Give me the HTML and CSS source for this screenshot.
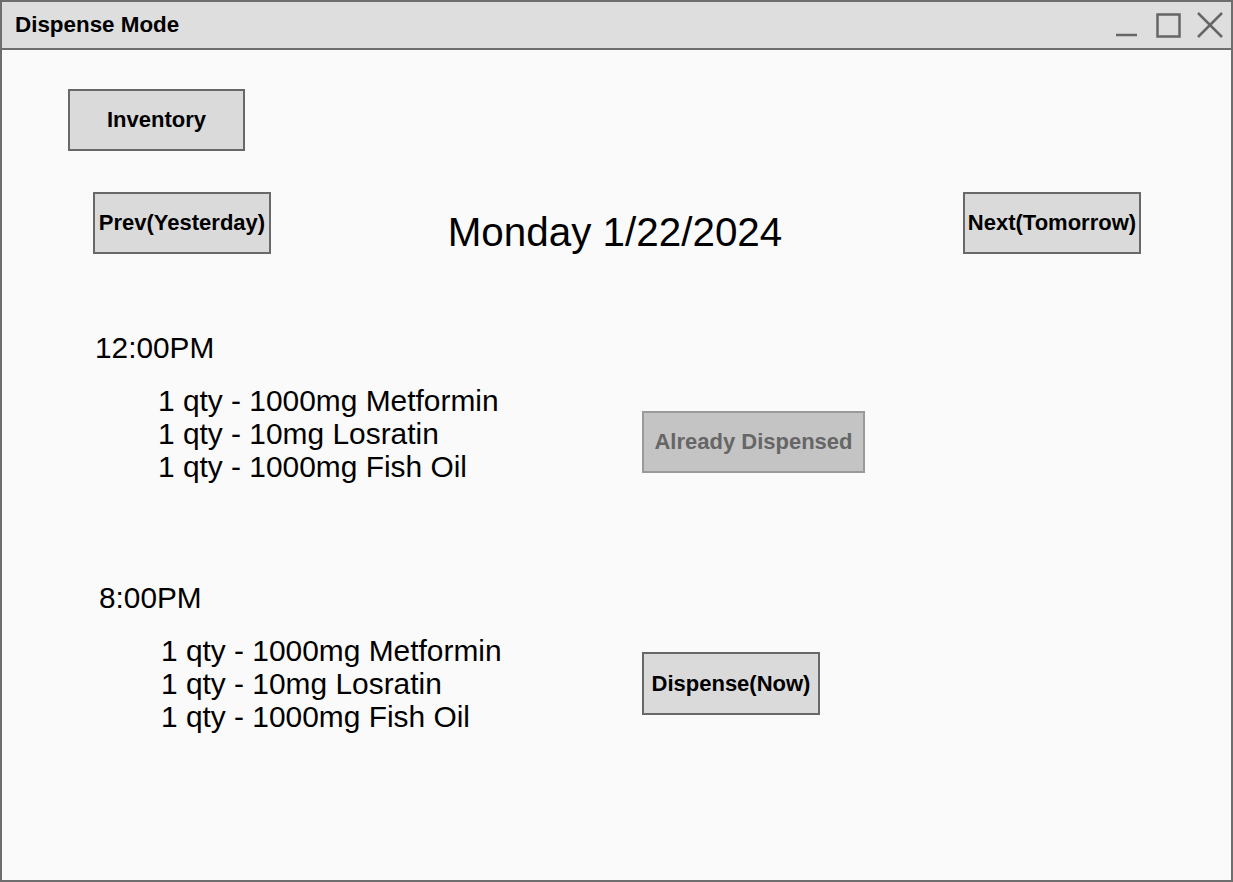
FILE: index.html
```html
<!DOCTYPE html>
<html lang="en">
<head>
<meta charset="utf-8">
<title>Dispense Mode</title>
<link rel="stylesheet" href="styles.css">
</head>
<body>
<div class="window">
  <header class="titlebar">
    <span class="title">Dispense Mode</span>
    <svg class="controls" width="120" height="46" viewBox="0 0 120 46" aria-hidden="true">
      <line x1="5" y1="33" x2="26" y2="33" stroke="#666" stroke-width="2.5"/>
      <rect x="46.5" y="12.5" width="22" height="22" fill="none" stroke="#666" stroke-width="2.5"/>
      <line x1="87" y1="11" x2="111" y2="35" stroke="#666" stroke-width="2.5"/>
      <line x1="111" y1="11" x2="87" y2="35" stroke="#666" stroke-width="2.5"/>
    </svg>
  </header>
  <main class="content">
    <button class="btn btn-inventory">Inventory</button>
    <div class="nav">
      <button class="btn">Prev(Yesterday)</button>
      <div class="date">Monday 1/22/2024</div>
      <button class="btn">Next(Tomorrow)</button>
    </div>
    <section class="slot">
      <div class="slot-time">12:00PM</div>
      <div class="slot-body">
        <ul class="meds">
          <li>1 qty - 1000mg Metformin</li>
          <li>1 qty - 10mg Losratin</li>
          <li>1 qty - 1000mg Fish Oil</li>
        </ul>
        <button class="btn btn-wide btn-disabled">Already Dispensed</button>
      </div>
    </section>
    <section class="slot slot-late">
      <div class="slot-time">8:00PM</div>
      <div class="slot-body">
        <ul class="meds">
          <li>1 qty - 1000mg Metformin</li>
          <li>1 qty - 10mg Losratin</li>
          <li>1 qty - 1000mg Fish Oil</li>
        </ul>
        <button class="btn btn-now">Dispense(Now)</button>
      </div>
    </section>
  </main>
</div>
</body>
</html>
```
FILE: styles.css
```css
* { box-sizing: border-box; }
html, body { margin: 0; padding: 0; }
body {
  font-family: "Liberation Sans", Arial, sans-serif;
  background: #fafafa;
  color: #000;
}
.window {
  width: 1233px;
  height: 882px;
  border: 2px solid #6e6e6e;
  background: #fafafa;
  display: flex;
  flex-direction: column;
}
.titlebar {
  height: 48px;
  flex: none;
  background: #dedede;
  border-bottom: 2px solid #6e6e6e;
  display: flex;
  align-items: center;
  justify-content: space-between;
  padding-left: 13px;
}
.title {
  font-size: 22.4px;
  font-weight: bold;
}
.controls { display: block; }
.content {
  flex: 1;
  display: flex;
  flex-direction: column;
  align-items: flex-start;
}
.btn {
  font-family: "Liberation Sans", Arial, sans-serif;
  font-size: 22px;
  font-weight: bold;
  color: #000;
  background: #dadada;
  border: 2px solid #686868;
  width: 178px;
  height: 62px;
  padding: 0;
  margin: 0;
  white-space: nowrap;
  display: flex;
  align-items: center;
  justify-content: center;
}
.btn-inventory {
  width: 177px;
  margin: 39px 0 0 66px;
}
.nav {
  margin: 41px 0 0 91px;
  width: 1048px;
  display: flex;
  justify-content: space-between;
  align-items: flex-start;
}
.date {
  font-size: 40.4px;
  line-height: 46px;
  margin-top: 17px;
  padding-right: 4px;
}
.slot { margin-top: 76px; }
.slot-late { margin-top: 98px; }
.slot-time {
  font-size: 29.8px;
  line-height: 34px;
  padding-left: 93px;
}
.slot-late .slot-time { padding-left: 97px; }
.slot-body {
  margin-top: 19px;
  display: flex;
  align-items: flex-start;
}
.meds {
  list-style: none;
  margin: 0;
  width: 640px;
  padding: 0 0 0 156px;
  font-size: 29.9px;
  line-height: 33px;
}
.slot-late .meds { padding-left: 159px; }
.btn-wide {
  width: 223px;
  margin-top: 27px;
}
.btn-disabled {
  background: #c4c4c4;
  border-color: #9a9a9a;
  color: #666;
}
.btn-now {
  height: 63px;
  margin-top: 18px;
}
```
